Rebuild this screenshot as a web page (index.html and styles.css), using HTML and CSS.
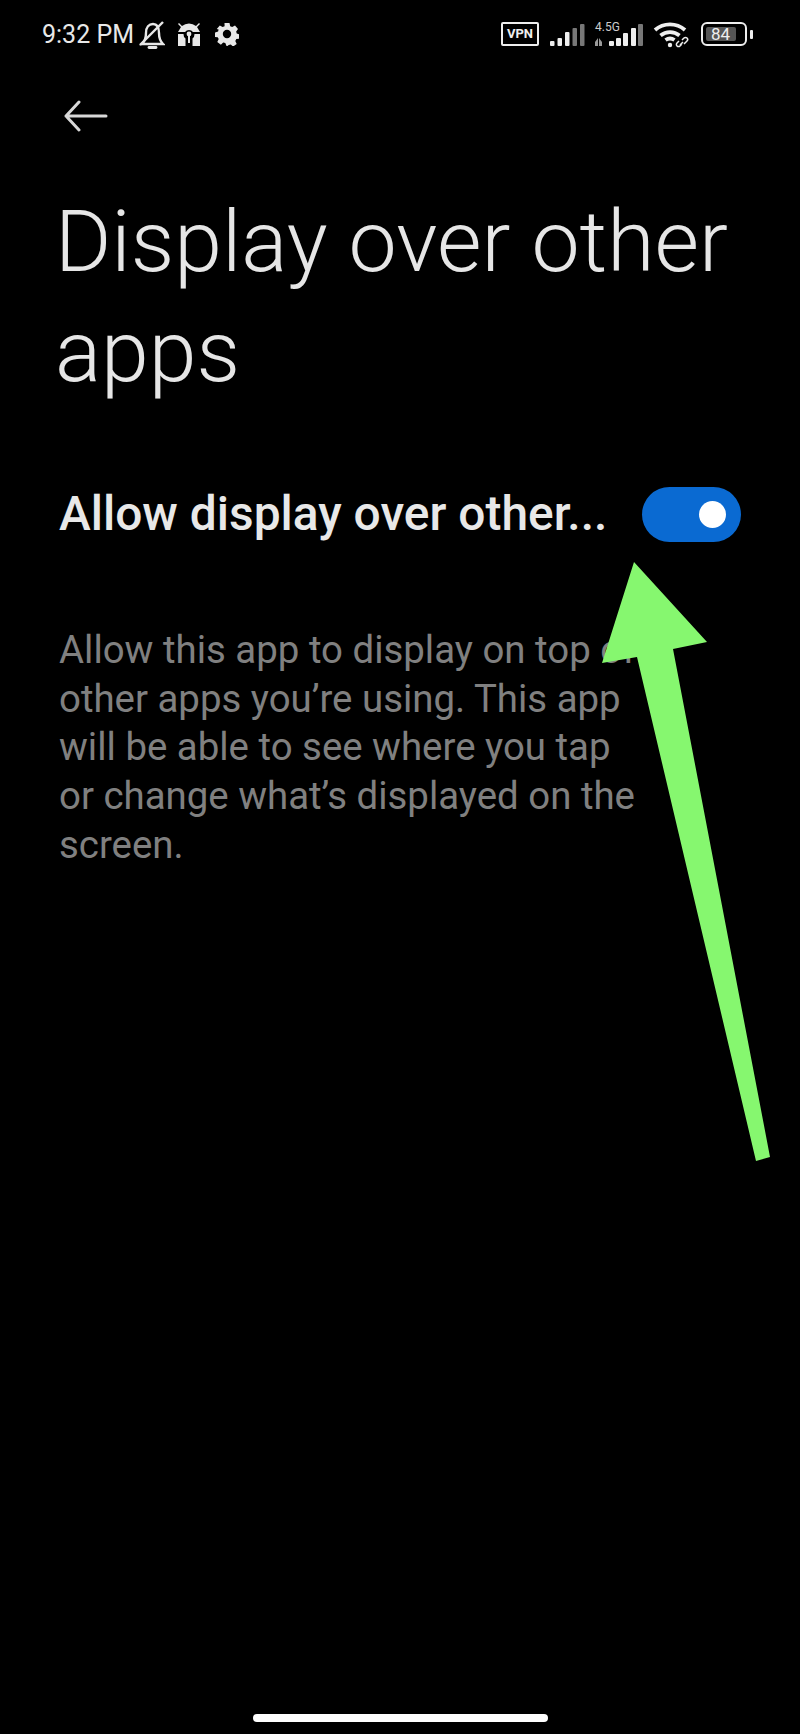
FILE: index.html
```html
<!DOCTYPE html>
<html lang="en">
<head>
    <meta charset="UTF-8">
    <meta name="viewport" content="width=device-width, initial-scale=1.0">
    <title>Display over other apps</title>
    <link rel="stylesheet" href="styles.css">
</head>
<body>
    <div class="screen">
        <div class="status-bar">
            <div class="status-left">
                <span class="time">9:32 PM</span>
                <svg class="ic-bell" width="26" height="32" viewBox="0 0 26 32" fill="none" stroke="#e8e8e8" stroke-width="2.400">
                    <path d="M3 26c3-3 4-6 4-11 0-6 3-9 7-9s6 3 6 9c0 5 1 8 4 11z"/>
                    <path d="M10 29.500h7" stroke-linecap="round" stroke-width="2.800"/>
                    <path d="M1 27L24 4"/>
                </svg>
                <svg class="ic-house" width="24" height="26" viewBox="0 0 24 26" fill="#e8e8e8">
                    <path d="M2 2l3 3a11 11 0 0 1 14 0l3-3 1 1-3 3 3 5H16a5 5 0 0 0-8 0H1l3-5-3-3z"/>
                    <path d="M1 13h5.500a5.500 5.500 0 0 0 2 4.500V25H1zM23 13h-5.500a5.500 5.500 0 0 1-2 4.500V25H23z"/>
                    <circle cx="12" cy="13" r="2.400"/>
                    <rect x="11" y="14" width="2" height="8"/>
                </svg>
                <svg class="ic-gear" width="24" height="24" viewBox="0 0 24 24" fill="#e8e8e8">
                    <path fill-rule="evenodd" d="M9.500 1h5l.7 3.200 2 .9 2.800-1.700 3 3.500-1.800 2.600.5 2 3 1-.4 4.300-3 .3-1 1.900 1.400 2.900-3.600 2.700-2.300-2.100-2.100.5L12.500 24h-1l-1.200-2.900-2.100-.5-2.300 2.100L2.300 20l1.400-2.900-1-1.900-3-.3.4-4.500 3-.8.500-2L1.800 7l3-3.600 2.800 1.700 2-.9zM12 7.800a4.200 4.200 0 1 0 0 8.400 4.200 4.200 0 0 0 0-8.400z"/>
                </svg>
            </div>
            <div class="status-right">
                <span class="vpn">VPN</span>
                <svg class="ic-signal" width="35" height="24" viewBox="0 0 35 24">
                    <rect x="0" y="19" width="4.500" height="5" rx="1" fill="#eee"/>
                    <rect x="7.500" y="16" width="4.500" height="8" rx="1" fill="#eee"/>
                    <rect x="15" y="10" width="4.500" height="14" rx="1" fill="#eee"/>
                    <rect x="22.500" y="6" width="4.500" height="18" rx="1" fill="#777"/>
                    <rect x="30" y="2" width="4.500" height="22" rx="1" fill="#777"/>
                </svg>
                <div class="net">
                    <span class="net-label">4.5G</span>
                    <svg width="50" height="24" viewBox="0 0 50 24">
                        <path d="M4 16v8H1v-4zM5 16l3 4v4H5z" fill="#999"/>
                        <rect x="15" y="19" width="5" height="5" rx="1" fill="#eee"/>
                        <rect x="22" y="16" width="5" height="8" rx="1" fill="#eee"/>
                        <rect x="29" y="11" width="5" height="13" rx="1" fill="#eee"/>
                        <rect x="37" y="6" width="5" height="18" rx="1" fill="#eee"/>
                        <rect x="44" y="2" width="5" height="22" rx="1" fill="#777"/>
                    </svg>
                </div>
                <svg class="ic-wifi" width="38" height="28" viewBox="0 0 38 28" fill="none" stroke="#eee" stroke-width="3.800">
                    <path d="M2 10a23 23 0 0 1 30 0"/>
                    <path d="M7.500 15.500a15 15 0 0 1 19 0"/>
                    <path d="M12.500 20a8 8 0 0 1 9 0"/>
                    <circle cx="17" cy="25" r="2.200" fill="#eee" stroke="none"/>
                    <path d="M27 25l3-3M31 24l3-3a2 2 0 0 0-3-3l-2 2M29 24l-2 2a2 2 0 0 1-3-3l2-2" stroke-width="1.500"/>
                </svg>
                <div class="battery">
                    <div class="battery-body">
                        <div class="battery-fill">84</div>
                    </div>
                    <div class="battery-tip"></div>
                </div>
            </div>
        </div>

        <div class="top-nav">
            <svg width="44" height="32" viewBox="0 0 44 32" fill="none" stroke="#d8d8d8" stroke-width="3" stroke-linecap="round" stroke-linejoin="round">
                <path d="M2 16h40M15 2L2 16l13 14"/>
            </svg>
        </div>

        <h1 class="page-title">Display over other apps</h1>

        <div class="setting-row">
            <span class="setting-label">Allow display over other...</span>
            <div class="toggle">
                <div class="toggle-knob"></div>
            </div>
        </div>

        <p class="setting-desc">Allow this app to display on top of other apps you’re using. This app will be able to see where you tap or change what’s displayed on the screen.</p>

        <div class="gesture-bar"></div>

        <!-- green annotation arrow on top of the page -->
        <svg class="annotation" width="800" height="1734" viewBox="0 0 800 1734">
            <path d="M634 562L707 642L673 649L770 1157L756 1161L637 657L602 663Z" fill="#86f76f"/>
        </svg>
    </div>
</body>
</html>
```

FILE: styles.css
```css
* {
    box-sizing: border-box;
}

body {
    margin: 0;
    background-color: #000;
    font-family: Roboto, "Noto Sans", sans-serif;
}

.screen {
    position: relative;
    width: 800px;
    height: 1734px;
    background-color: #000;
    overflow: hidden;
    display: flex;
    flex-direction: column;
}

.status-bar {
    height: 70px;
    padding: 18px 47px 0 42px;
    display: flex;
    justify-content: space-between;
    align-items: flex-start;
}

.status-left {
    display: flex;
    align-items: center;
    height: 32px;
}

.time {
    font-size: 25px;
    color: #e8e8e8;
    margin-right: 5px;
}

.ic-house {
    margin-left: 12px;
}

.ic-gear {
    margin-left: 14px;
}

.status-right {
    display: flex;
    align-items: center;
    height: 32px;
}

.vpn {
    width: 38px;
    height: 24px;
    border: 2.500px solid #eee;
    border-radius: 2px;
    color: #eee;
    font-size: 13px;
    font-weight: 700;
    line-height: 19px;
    text-align: center;
}

.ic-signal {
    margin-left: 11px;
}

.net {
    position: relative;
    margin-left: 9px;
    width: 50px;
    height: 24px;
}

.net-label {
    position: absolute;
    top: -2px;
    left: 1px;
    font-size: 12px;
    color: #ccc;
}

.net svg {
    position: absolute;
    top: 0;
    left: 0;
}

.ic-wifi {
    margin-left: 9px;
}

.battery {
    margin-left: 10px;
    display: flex;
    align-items: center;
}

.battery-body {
    width: 46px;
    height: 24px;
    border: 2.500px solid #eee;
    border-radius: 6px;
    padding: 2.500px;
}

.battery-fill {
    width: 30px;
    height: 14px;
    background-color: #555;
    border-radius: 2px;
    color: #eee;
    font-size: 17px;
    line-height: 14px;
    text-align: center;
}

.battery-tip {
    width: 3px;
    height: 9px;
    margin-left: 3px;
    background-color: #eee;
    border-radius: 1px;
}

.top-nav {
    height: 32px;
    margin-top: 30px;
    padding-left: 64px;
    display: flex;
}

.page-title {
    margin: 55px 0 0;
    padding: 0 50px 0 55px;
    font-size: 86px;
    font-weight: 300;
    line-height: 110px;
    color: #e6e6e6;
}

.setting-row {
    margin-top: 79px;
    padding: 0 59px 0 59px;
    display: flex;
    justify-content: space-between;
    align-items: center;
}

.setting-label {
    font-size: 47.900px;
    font-weight: 500;
    color: #e8e8e8;
    white-space: nowrap;
}

.toggle {
    width: 99px;
    height: 55px;
    border-radius: 28px;
    background-color: #0a6ad2;
    display: flex;
    align-items: center;
    justify-content: flex-end;
    padding-right: 15px;
}

.toggle-knob {
    width: 27px;
    height: 27px;
    border-radius: 50%;
    background-color: #fff;
}

.setting-desc {
    margin: 84px 0 0;
    padding: 0 155px 0 59px;
    font-size: 38.400px;
    line-height: 48.700px;
    color: #808080;
}

.gesture-bar {
    margin: auto auto 12px;
    width: 295px;
    height: 8px;
    border-radius: 4px;
    background-color: #fff;
}

.annotation {
    position: absolute;
    top: 0;
    left: 0;
}
```
